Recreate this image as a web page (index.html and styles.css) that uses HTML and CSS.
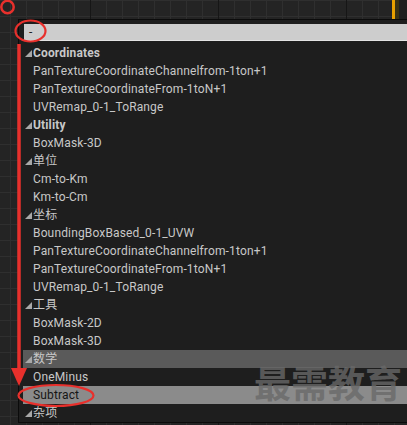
FILE: index.html
```html
<!DOCTYPE html>
<html lang="en">
<head>
    <meta charset="UTF-8">
    <meta name="viewport" content="width=device-width, initial-scale=1.0">
    <title>Material Function Palette</title>
    <link rel="stylesheet" href="styles.css">
</head>
<body>
    <div class="canvas">
        <div class="top-strip">
            <span class="marker"></span>
            <span class="marker-shadow"></span>
            <span class="marker-rest"></span>
        </div>

        <div class="palette">
            <div class="search"><span class="search-text">-</span></div>
            <ul class="tree">
                <li class="group">Coordinates</li>
                <li class="item">PanTextureCoordinateChannelfrom-1ton+1</li>
                <li class="item">PanTextureCoordinateFrom-1toN+1</li>
                <li class="item">UVRemap_0-1_ToRange</li>
                <li class="group">Utility</li>
                <li class="item">BoxMask-3D</li>
                <li class="group cjk">单位</li>
                <li class="item">Cm-to-Km</li>
                <li class="item">Km-to-Cm</li>
                <li class="group cjk">坐标</li>
                <li class="item">BoundingBoxBased_0-1_UVW</li>
                <li class="item">PanTextureCoordinateChannelfrom-1ton+1</li>
                <li class="item">PanTextureCoordinateFrom-1toN+1</li>
                <li class="item">UVRemap_0-1_ToRange</li>
                <li class="group cjk">工具</li>
                <li class="item">BoxMask-2D</li>
                <li class="item">BoxMask-3D</li>
                <li class="group cjk hovered">数学</li>
                <li class="item">OneMinus</li>
                <li class="item selected">Subtract</li>
                <li class="group cjk">杂项</li>
            </ul>
        </div>

        <div class="watermark">最需教育</div>

        <!-- red markup drawn over the screenshot -->
        <svg class="annotations" width="407" height="425" viewBox="0 0 407 425">
            <circle cx="7.5" cy="7" r="6.2" fill="none" stroke="#e8302c" stroke-width="2.5"/>
            <ellipse cx="30.5" cy="31" rx="15" ry="10.5" fill="none" stroke="#e8302c" stroke-width="2.2"/>
            <line x1="19" y1="44" x2="19" y2="370" stroke="#e8302c" stroke-width="3.5"/>
            <polygon points="11,368 27,368 19,386" fill="#e8302c"/>
            <ellipse cx="56" cy="395.5" rx="37.5" ry="10.5" fill="none" stroke="#e8302c" stroke-width="2.2"/>
        </svg>
    </div>
</body>
</html>
```

FILE: styles.css
```css
/* Basic Reset */
* {
    margin: 0;
    padding: 0;
    box-sizing: border-box;
}

body {
    width: 407px;
    height: 425px;
    overflow: hidden;
    font-family: Roboto, "Noto Sans CJK SC", sans-serif;
    font-size: 12px;
}

/* Graph canvas with grid */
.canvas {
    position: relative;
    width: 407px;
    height: 425px;
    background:
        linear-gradient(to right, #161616 1px, transparent 1px) 90px 0 / 128px 100%,
        linear-gradient(to right, #2f2f2f 1px, transparent 1px) 10px 0 / 16px 16px,
        linear-gradient(to bottom, #2f2f2f 1px, transparent 1px) 0 0 / 16px 16px,
        #242424;
}

.top-strip {
    height: 19px;
    display: flex;
    justify-content: flex-end;
}

.marker {
    width: 3px;
    background: #e8a000;
}

.marker-shadow {
    width: 4px;
    background: #3a3214;
}

.marker-rest {
    width: 8px;
    background: #1f1f1f;
}

/* Palette panel */
.palette {
    margin-left: 18px;
    padding: 4px 0 0 4px;
    background: #1e1e1e;
    border-top: 1px solid #0b0b0b;
    border-left: 1px solid #0b0b0b;
    border-bottom: 1px solid #0b0b0b;
}

.search {
    height: 17px;
    margin-left: 1px;
    margin-bottom: 3px;
    padding-left: 5px;
    background: #cdcdcd;
    border-bottom: 1px solid #e4e4e4;
    line-height: 16px;
    color: #202020;
}

.tree {
    list-style: none;
}

.tree li {
    height: 18px;
    line-height: 18px;
    white-space: nowrap;
    letter-spacing: 0.15px;
    color: #c8c8c8;
}

.item {
    padding-left: 10px;
}

.group {
    padding-left: 2px;
    font-weight: bold;
    color: #d4d4d4;
}

.group::before {
    content: "";
    display: inline-block;
    width: 7px;
    height: 7px;
    margin-right: 1px;
    background: #a8a8a8;
    clip-path: polygon(100% 0, 100% 100%, 0 100%);
}

.group.cjk {
    font-weight: normal;
}

.tree .hovered {
    background: #5a5a5a;
}

.tree .selected {
    background: #8b8b8b;
    color: #161616;
}

/* Watermark */
.watermark {
    position: absolute;
    left: 254px;
    top: 364px;
    font-family: "Noto Sans CJK SC", sans-serif;
    font-size: 37px;
    font-weight: bold;
    line-height: 1;
    color: rgba(105, 105, 105, 0.78);
    white-space: nowrap;
}

.annotations {
    position: absolute;
    left: 0;
    top: 0;
    pointer-events: none;
}
```
